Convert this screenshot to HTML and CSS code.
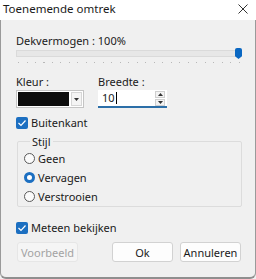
FILE: index.html
```html
<!DOCTYPE html>
<html lang="nl">
  <head>
    <meta charset="UTF-8" />
    <title>Toenemende omtrek</title>
    <link rel="stylesheet" href="styles.css">
  </head>
  <body>
    <div class="window">
      <div class="titlebar">
        <span class="title">Toenemende omtrek</span>
        <svg class="close" width="10" height="10" viewBox="0 0 10 10">
          <path d="M0.5 0.5 L9.5 9.5 M9.5 0.5 L0.5 9.5" stroke="#333" stroke-width="1" fill="none" />
        </svg>
      </div>

      <div class="client">
        <div class="label opacity-label">Dekvermogen : 100%</div>
        <div class="slider">
          <div class="track"></div>
          <div class="thumb"></div>
        </div>
        <div class="ticks"></div>

        <div class="fields">
          <div class="field">
            <div class="label">Kleur :</div>
            <div class="color-combo">
              <span class="swatch"></span>
              <span class="drop">
                <svg width="5" height="3" viewBox="0 0 5 3"><path d="M0 0 H5 L2.5 3 Z" fill="#333" /></svg>
              </span>
            </div>
          </div>
          <div class="field">
            <div class="label">Breedte :</div>
            <div class="spin">
              <span class="value">10</span>
              <span class="caret"></span>
              <span class="spin-buttons">
                <span class="spin-btn"><svg width="5" height="3" viewBox="0 0 5 3"><path d="M0 3 H5 L2.5 0 Z" fill="#333" /></svg></span>
                <span class="spin-btn"><svg width="5" height="3" viewBox="0 0 5 3"><path d="M0 0 H5 L2.5 3 Z" fill="#333" /></svg></span>
              </span>
            </div>
          </div>
        </div>

        <div class="check outside-check">
          <span class="box checked"><svg width="10" height="8" viewBox="0 0 10 8"><path d="M1.5 4 L4 6.5 L8.5 1.5" stroke="#fff" stroke-width="1.2" fill="none" /></svg></span>
          <span>Buitenkant</span>
        </div>

        <fieldset class="group">
          <legend>Stijl</legend>
          <div class="radio"><span class="dot"></span><span>Geen</span></div>
          <div class="radio"><span class="dot selected"></span><span>Vervagen</span></div>
          <div class="radio"><span class="dot"></span><span>Verstrooien</span></div>
        </fieldset>

        <div class="check preview-check">
          <span class="box checked"><svg width="10" height="8" viewBox="0 0 10 8"><path d="M1.5 4 L4 6.5 L8.5 1.5" stroke="#fff" stroke-width="1.2" fill="none" /></svg></span>
          <span>Meteen bekijken</span>
        </div>

        <div class="buttons">
          <button class="btn disabled">Voorbeeld</button>
          <button class="btn ok">Ok</button>
          <button class="btn">Annuleren</button>
        </div>
      </div>
    </div>
  </body>
</html>
```

FILE: styles.css
```css
body {
  margin: 0;
  padding: 0;
  font-family: "Noto Sans", "Open Sans", sans-serif;
  font-size: 11px;
  color: #1a1a1a;
  background-color: #f0f0f0;
}

.window {
  width: 256px;
  height: 279px;
  display: flex;
  flex-direction: column;
  box-sizing: border-box;
}

.titlebar {
  height: 20px;
  display: flex;
  align-items: center;
  justify-content: space-between;
  padding: 0 8px 0 3px;
  background-color: #ffffff;
  flex-shrink: 0;
}

.title {
  font-size: 11.5px;
  line-height: 15px;
  margin-top: -3px;
}

.close {
  margin-top: -2px;
}

.client {
  flex: 1;
  display: flex;
  flex-direction: column;
  padding: 0 14px 0 15px;
  background-color: #f0f0f0;
  border-left: 1px solid #9a9a9a;
  border-right: 1px solid #9a9a9a;
  border-bottom: 2px solid #8f8f8f;
  border-radius: 0 0 6px 6px;
}

.label {
  line-height: 15px;
}

.opacity-label {
  margin-top: 13px;
}

.slider {
  position: relative;
  margin-top: 2px;
  width: 227px;
  height: 7px;
}

.track {
  width: 224px;
  height: 7px;
  box-sizing: border-box;
  background-color: #e7e7e7;
  border: 1px solid #dadada;
}

.thumb {
  position: absolute;
  left: 219px;
  top: -2px;
  width: 7px;
  height: 11px;
  background-color: #0a67c2;
  border-radius: 2px 2px 3px 3px;
  clip-path: polygon(0 0, 100% 0, 100% 75%, 50% 100%, 0 75%);
}

.ticks {
  margin-top: 5px;
  margin-left: 2px;
  width: 223px;
  height: 1px;
  background-image: repeating-linear-gradient(to right, #b8b8b8 0, #b8b8b8 1px, transparent 1px, transparent 8.5px);
}

.fields {
  display: flex;
  gap: 14px;
  margin-top: 11px;
}

.field {
  display: flex;
  flex-direction: column;
  gap: 1px;
}

.color-combo {
  width: 68px;
  height: 18px;
  box-sizing: border-box;
  border: 1px solid #c4c4c4;
  background-color: #ffffff;
  display: flex;
  align-items: center;
  padding: 0 1px;
  gap: 2px;
}

.swatch {
  width: 52px;
  height: 14px;
  background-color: #0c0c0c;
}

.drop {
  width: 11px;
  height: 14px;
  box-sizing: border-box;
  border: 1px solid #d6d6d6;
  background-color: #f4f4f4;
  display: flex;
  align-items: center;
  justify-content: center;
}

.spin {
  width: 69px;
  height: 18px;
  box-sizing: border-box;
  background-color: #ffffff;
  border-bottom: 2px solid #2c6fa8;
  display: flex;
  align-items: center;
  padding-left: 4px;
}

.value {
  line-height: 14px;
}

.caret {
  width: 1px;
  height: 12px;
  background-color: #000;
  margin-left: 1px;
}

.spin-buttons {
  margin-left: auto;
  margin-right: 2px;
  display: flex;
  flex-direction: column;
  gap: 1px;
}

.spin-btn {
  width: 10px;
  height: 7px;
  box-sizing: border-box;
  border: 1px solid #cfcfcf;
  background-color: #f3f3f3;
  display: flex;
  align-items: center;
  justify-content: center;
}

.check {
  display: flex;
  align-items: center;
  gap: 3px;
  line-height: 15px;
}

.outside-check {
  margin-top: 7px;
}

.preview-check {
  margin-top: 13px;
}

.box {
  width: 12px;
  height: 12px;
  box-sizing: border-box;
  border-radius: 2px;
  display: flex;
  align-items: center;
  justify-content: center;
}

.box.checked {
  background-color: #1c6fc1;
}

.group {
  margin: 4px 0 0 1px;
  width: 225px;
  height: 73px;
  box-sizing: border-box;
  padding: 2px 0 0 6px;
  border: 1px solid #dcdcdc;
  border-radius: 2px;
  display: flex;
  flex-direction: column;
  gap: 4px;
}

.group legend {
  padding: 0 2px;
  margin-left: 6px;
  line-height: 15px;
}

.radio {
  display: flex;
  align-items: center;
  gap: 3px;
  line-height: 15px;
}

.dot {
  width: 11px;
  height: 11px;
  box-sizing: border-box;
  border-radius: 50%;
  border: 1px solid #5a5a5a;
  background-color: #fbfbfb;
}

.dot.selected {
  border: 3px solid #1c6fc1;
  background-color: #ffffff;
}

.buttons {
  display: flex;
  gap: 7px;
  margin-top: 7px;
}

.btn {
  width: 61px;
  height: 20px;
  box-sizing: border-box;
  font-family: inherit;
  font-size: 11px;
  color: #1a1a1a;
  background-color: #fdfdfd;
  border: 1px solid #d2d2d2;
  border-radius: 3px;
  padding: 0;
}

.btn.disabled {
  margin-left: 1px;
  color: #a3a3a3;
  background-color: #f5f5f5;
  border-color: #e6e6e6;
}

.btn.ok {
  margin-left: 27px;
}
```
